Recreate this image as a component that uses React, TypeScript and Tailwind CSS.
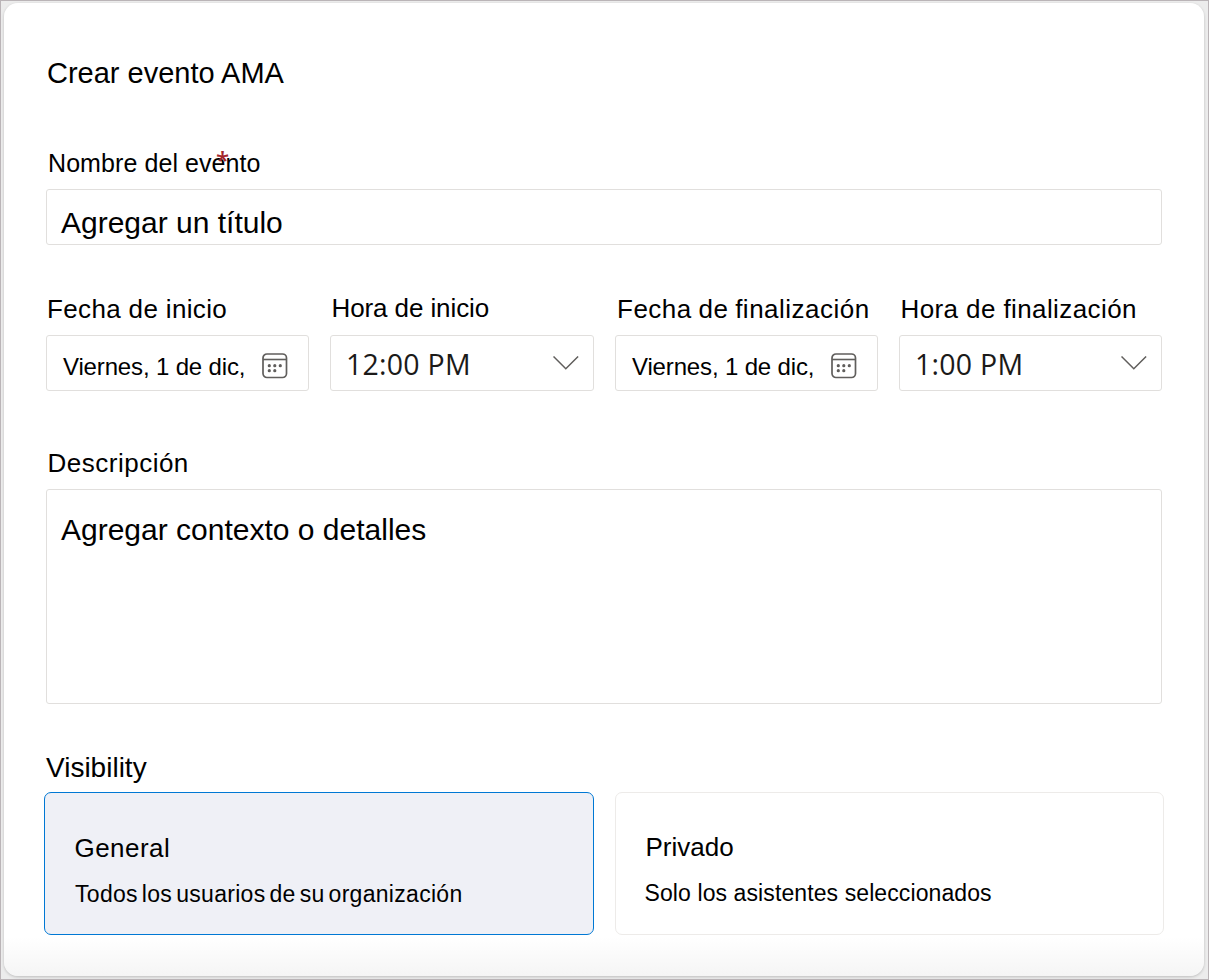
import clsx from "clsx";

type DateTimeField = {
    label: string;
    labelClass: string;
    value: string;
    kind: "date" | "time";
};

const fields: DateTimeField[] = [
    { label: "Fecha de inicio", labelClass: "pl-px mb-2.5 tracking-[0.35px]", value: "Viernes, 1 de dic,", kind: "date" },
    { label: "Hora de inicio", labelClass: "pl-[1.5px] mb-[11px] tracking-[-0.1px]", value: "12:00 PM", kind: "time" },
    {
        label: "Fecha de finalización",
        labelClass: "pl-0.5 mb-2.5 tracking-[0.5px] [word-spacing:-1px]",
        value: "Viernes, 1 de dic,",
        kind: "date",
    },
    { label: "Hora de finalización", labelClass: "pl-[1.5px] mb-2.5 tracking-[0.4px]", value: "1:00 PM", kind: "time" },
];

function CalendarIcon() {
    return (
        <svg width="26" height="26" viewBox="0 0 26 26" fill="none" className="shrink-0" aria-hidden>
            <rect x="1" y="1" width="23.5" height="23.5" rx="4" stroke="#605e5c" strokeWidth="1.7" />
            <path d="M1 6.5h23.5" stroke="#605e5c" strokeWidth="1.6" />
            <g fill="#605e5c">
                <circle cx="7.3" cy="12.7" r="1.6" />
                <circle cx="12.8" cy="12.7" r="1.6" />
                <circle cx="18.3" cy="12.7" r="1.6" />
                <circle cx="7.3" cy="17.7" r="1.6" />
                <circle cx="12.8" cy="17.7" r="1.6" />
            </g>
        </svg>
    );
}

function ChevronIcon() {
    return (
        <svg width="26" height="15" viewBox="0 0 26 15" fill="none" className="shrink-0" aria-hidden>
            <path d="M0.5 0.5L12.8 12.8L25.1 0.5" stroke="#605e5c" strokeWidth="1.5" />
        </svg>
    );
}

function Field({ field }: { field: DateTimeField }) {
    return (
        <div>
            <div className={clsx("whitespace-nowrap text-[26px] leading-8", field.labelClass)}>{field.label}</div>
            {field.kind === "date" ? (
                <button className="flex h-14 w-full items-start justify-between rounded-[3px] border border-[#e1dfdd] pl-4 pr-5">
                    <span className="mt-[15px] whitespace-nowrap text-2xl leading-8 tracking-[-0.15px]">{field.value}</span>
                    <span className="mt-[17px]">
                        <CalendarIcon />
                    </span>
                </button>
            ) : (
                <button className="flex h-14 w-full items-start justify-between rounded-[3px] border border-[#e1dfdd] pl-[15px] pr-3.5">
                    <span className="mt-3 whitespace-nowrap font-['Open_Sans',sans-serif] text-[28.5px] leading-8 tracking-[0.25px] text-[#1b1a19]">
                        {field.value}
                    </span>
                    <span className="mt-5">
                        <ChevronIcon />
                    </span>
                </button>
            )}
        </div>
    );
}

export default function App() {
    return (
        <div className="h-[980px] w-[1209px] border border-[#bab4b7] bg-[#ececec] pl-[3px] pr-1 pt-0.5 font-['Liberation_Sans',Arial,sans-serif] text-black">
            <main className="h-[973px] rounded-[14px] bg-linear-to-b from-white from-96% to-[#f5f5f5] pl-10 pr-10 pt-[54px] shadow-[0_1px_3px_rgba(0,0,0,0.2)]">
                <h1 className="pl-[3px] text-[29px] leading-8">Crear evento AMA</h1>

                <div className="mt-[58px] px-0.5">
                    <label className="relative inline-block pl-0.5 align-top text-[25px] leading-8 tracking-[0.08px]">
                        Nombre del evento
                        <span className="absolute -top-[3px] left-[170px] font-['Open_Sans',sans-serif] text-[24px] font-semibold text-[#a4262c]">
                            *
                        </span>
                    </label>
                    <div className="mt-2.5 h-14 rounded-[3px] border border-[#e1dfdd] pl-3.5 pt-[17px] text-[30px] leading-8">
                        Agregar un título
                    </div>
                </div>

                <div className="mt-[47px] grid grid-cols-[263px_264px_263px_263px] items-end gap-x-[21px] px-0.5">
                    {fields.map((field) => (
                        <Field key={field.label} field={field} />
                    ))}
                </div>

                <div className="mt-14 px-0.5">
                    <div className="pl-[1.5px] text-[26px] leading-8 tracking-[0.5px]">Descripción</div>
                    <div className="mt-2.5 h-[215px] rounded-[3px] border border-[#e1dfdd] pl-3.5 pt-6 text-[30px] leading-8">
                        Agregar contexto o detalles
                    </div>
                </div>

                <div className="mt-12">
                    <div className="pl-0.5 text-[28px] leading-8">Visibility</div>
                    <div className="mt-2 grid grid-cols-[550px_549px] gap-x-[21px]">
                        <div className="h-[143px] rounded-[7px] border border-[#0078d4] bg-[#eff0f6] pl-[29px] pt-[39px]">
                            <div className="pl-[0.5px] text-[26px] leading-8 tracking-[0.45px]">General</div>
                            <div className="mt-3.5 whitespace-nowrap pl-px text-[23px] leading-8 tracking-[0.3px] [word-spacing:-2.7px]">
                                Todos los usuarios de su organización
                            </div>
                        </div>
                        <div className="h-[143px] rounded-[7px] border border-[#edebe9] pl-7 pt-[38px]">
                            <div className="pl-[1.5px] text-[26px] leading-8">Privado</div>
                            <div className="mt-3.5 whitespace-nowrap pl-[0.5px] text-[23px] leading-8 tracking-[0.1px]">
                                Solo los asistentes seleccionados
                            </div>
                        </div>
                    </div>
                </div>
            </main>
        </div>
    );
}
